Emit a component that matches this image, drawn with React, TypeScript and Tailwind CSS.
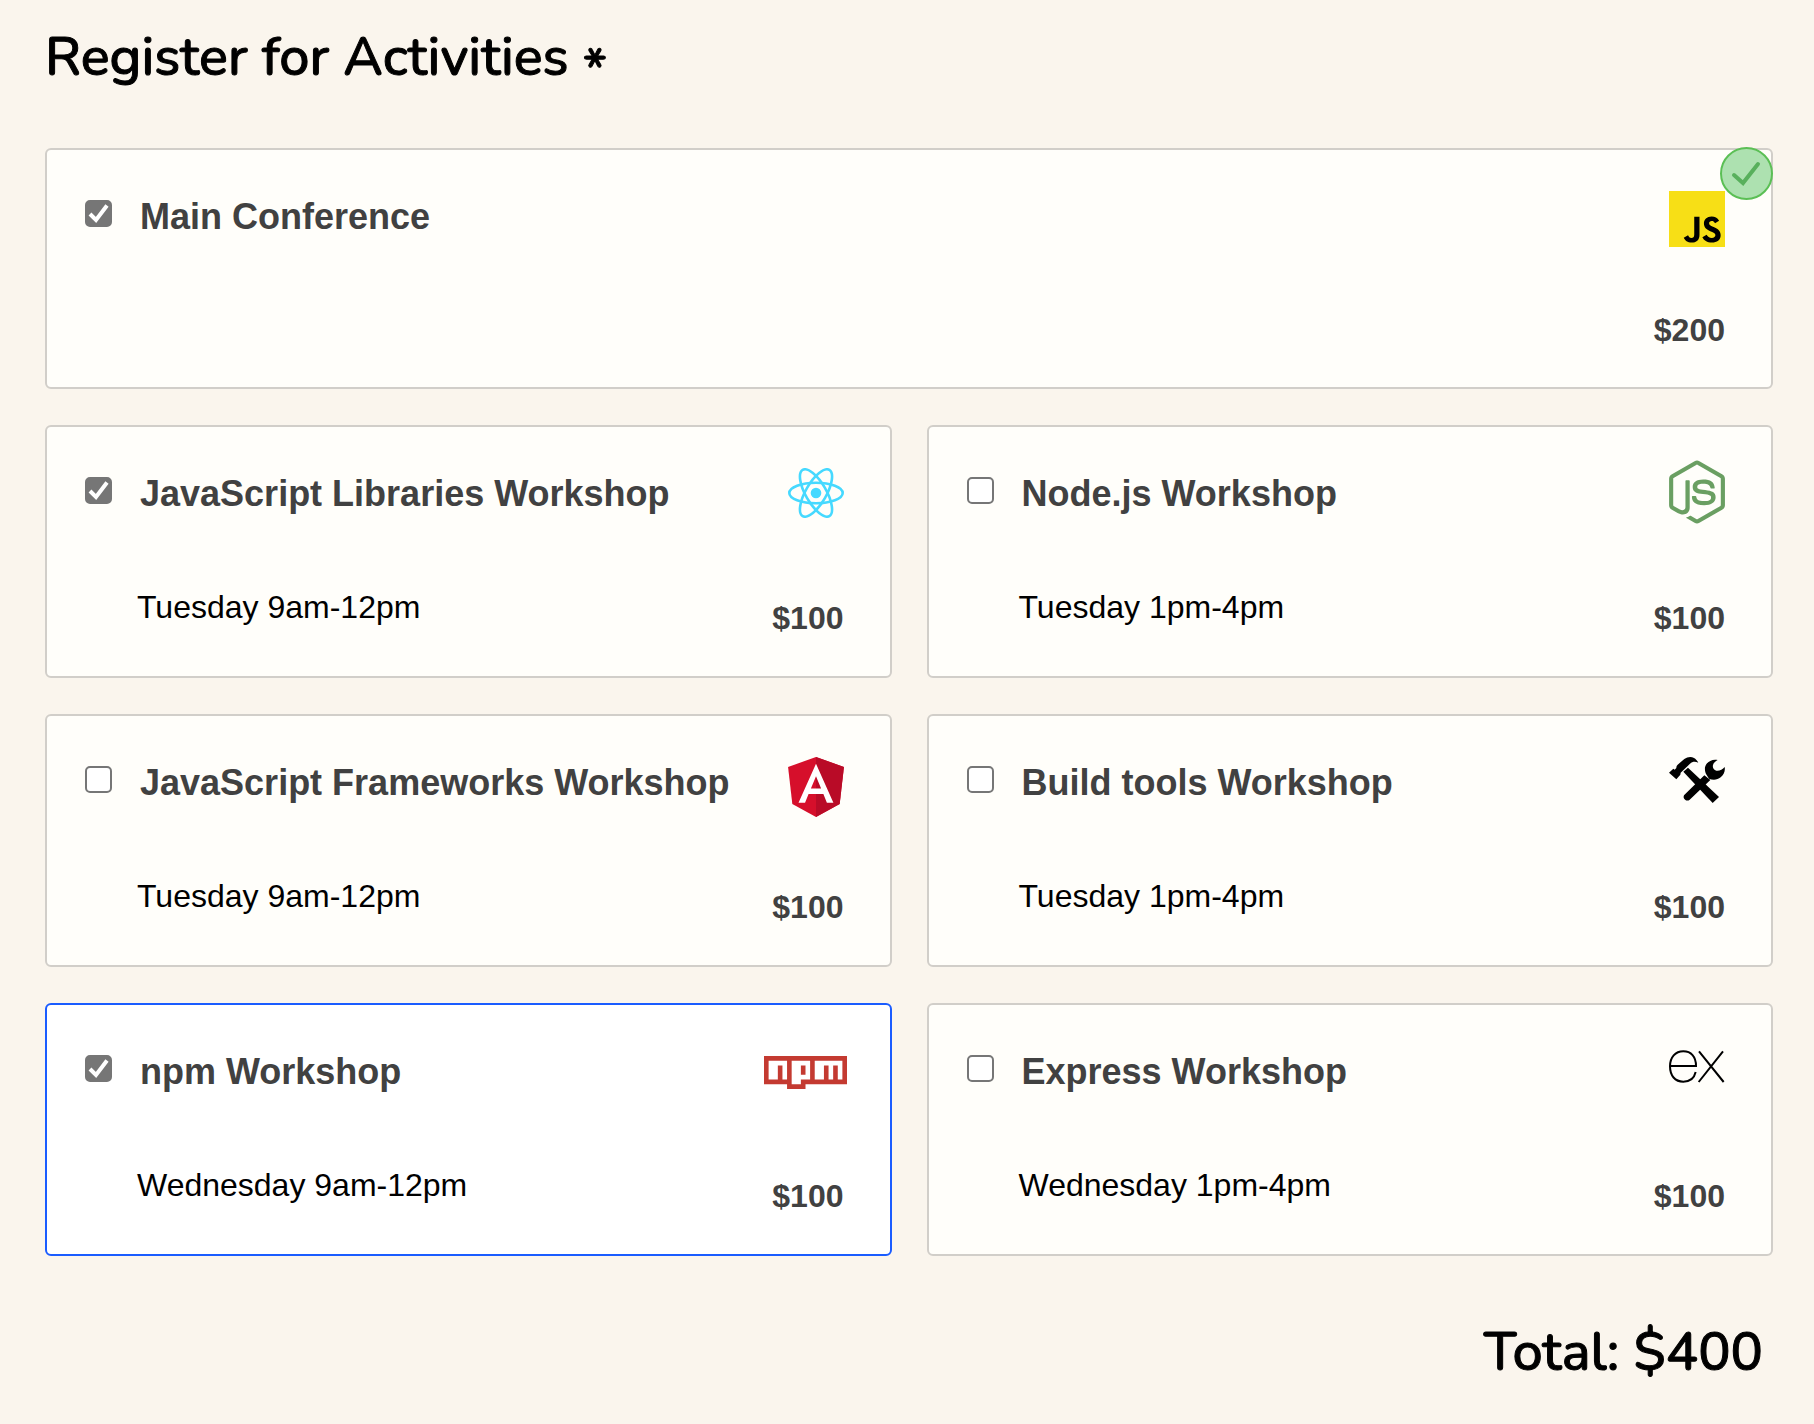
import { useState } from "react";
import type { ReactNode } from "react";
import { FaNodeJs } from "react-icons/fa";

type Activity = {
  id: string;
  title: string;
  time?: string;
  cost: number;
  icon: ReactNode;
};

function JsLogo() {
  return (
    <svg y="7" width="56" height="56" viewBox="0 0 630 630">
      <rect width="630" height="630" fill="#f7df16" />
      <path d="m423.2 492.19c12.69 20.72 29.2 35.95 58.4 35.95 24.53 0 40.2-12.26 40.2-29.2 0-20.3-16.1-27.49-43.1-39.3l-14.8-6.35c-42.72-18.2-71.1-41-71.1-89.2 0-44.4 33.83-78.2 86.7-78.2 37.64 0 64.7 13.1 84.2 47.4l-46.1 29.6c-10.15-18.2-21.1-25.37-38.1-25.37-17.34 0-28.33 11-28.33 25.37 0 17.76 11 24.95 36.4 35.95l14.8 6.34c50.3 21.57 78.7 43.56 78.7 93 0 53.3-41.87 82.5-98.1 82.5-54.98 0-90.5-26.2-107.88-60.54zm-209.13 5.13c9.3 16.5 17.76 30.45 38.1 30.45 19.45 0 31.72-7.61 31.72-37.2v-201.3h59.2v202.1c0 61.3-35.94 89.2-88.4 89.2-47.4 0-74.85-24.53-88.81-54.075z" />
    </svg>
  );
}

function ReactLogo() {
  return (
    <svg y="7" width="56" height="50" viewBox="-28 -25 56 50">
      <circle r="5.3" fill="#46d9ff" />
      <g fill="none" stroke="#46d9ff" strokeWidth="2.6">
        <ellipse rx="26.7" ry="10.3" />
        <ellipse rx="26.7" ry="10.3" transform="rotate(60)" />
        <ellipse rx="26.7" ry="10.3" transform="rotate(120)" />
      </g>
    </svg>
  );
}

function NodeLogo() {
  return <FaNodeJs x="-4" y="-1" size={64} color="#6a9f62" />;
}

function AngularLogo() {
  return (
    <svg y="7" width="56" height="60" viewBox="31.9 30 186.2 200">
      <path fill="#d60f2b" d="M125 30L31.9 63.2l14.2 123.1L125 230l78.9-43.7 14.2-123.1z" />
      <path fill="#b90b27" d="M125 30V230l78.9-43.7 14.2-123.1L125 30z" />
      <path
        fill="#fff"
        d="M125 52.1L66.8 182.6h21.7l11.7-29.2h49.4l11.7 29.2H183L125 52.1zm17 83.3h-34l17-40.9 17 40.9z"
      />
    </svg>
  );
}

function ToolsIcon() {
  return (
    <svg y="7" width="56" height="46" viewBox="0 0 168 138">
      <path d="M0 47L13 35L17 38L22 33C22 29 23 26 26 23L46 6C55 0 66 -2 75 3C80 6 85 11 88 17C78 13 70 14 63 20L35 47L34 53L22 67Z" />
      <path d="M43 44L57 32L150 120L131 138Z" />
      <path d="M45 115L106 55L124 69L62 128A11 11 0 0 1 45 115Z" />
      <path d="M146 9C130 5 112 14 108 31C107 41 109 48 113 54L120 65C130 70 145 70 155 61C165 53 169 42 167 30C161 37 150 43 142 41C134 39 130 32 132 24C134 17 140 12 146 9Z" />
    </svg>
  );
}

function NpmLogo() {
  return (
    <svg x="-24" y="17" width="83" height="33" viewBox="0 0 18 7" preserveAspectRatio="none">
      <path fill="#fff" d="M1 1h16v4H8v1H6V5H1z" />
      <path
        fill="#c43a31"
        d="M0 0h18v6H9v1H5V6H0V0zM1 5h2V2h1v3h1V1H1v4zM6 1v5h2V5h2V1H6zM8 2h1v2H8V2zM11 1v4h2V2h1v3h1V2h1v3h1V1H11z"
      />
    </svg>
  );
}

function ExpressLogo() {
  return (
    <svg y="11" width="56" height="33" viewBox="0 0 168 99">
      <g fill="none" stroke="#000" strokeWidth="6">
        <path d="M3 48H81C81 20 66 4 43 4C19 4 3 22 3 49C3 77 18 95 43 95C63 95 76 83 80 66" />
        <path d="M90 4L164 96M162 4L89 96" />
      </g>
    </svg>
  );
}

const activities: Activity[] = [
  { id: "main", title: "Main Conference", cost: 200, icon: <JsLogo /> },
  { id: "libs", title: "JavaScript Libraries Workshop", time: "Tuesday 9am-12pm", cost: 100, icon: <ReactLogo /> },
  { id: "node", title: "Node.js Workshop", time: "Tuesday 1pm-4pm", cost: 100, icon: <NodeLogo /> },
  { id: "frameworks", title: "JavaScript Frameworks Workshop", time: "Tuesday 9am-12pm", cost: 100, icon: <AngularLogo /> },
  { id: "build", title: "Build tools Workshop", time: "Tuesday 1pm-4pm", cost: 100, icon: <ToolsIcon /> },
  { id: "npm", title: "npm Workshop", time: "Wednesday 9am-12pm", cost: 100, icon: <NpmLogo /> },
  { id: "express", title: "Express Workshop", time: "Wednesday 1pm-4pm", cost: 100, icon: <ExpressLogo /> },
];

function ValidBadge() {
  return (
    <span className="absolute -top-[3px] -right-0.5 size-[53px] rounded-full border-2 border-[#5bbf55] bg-[#ade1b0]">
      <svg className="size-full" viewBox="0 0 49 49" fill="none" stroke="#58b05c" strokeWidth="4" strokeLinecap="round">
        <path d="M12 26L21 34L36 15" />
      </svg>
    </span>
  );
}

type CardProps = {
  activity: Activity;
  checked: boolean;
  active: boolean;
  onToggle: () => void;
  onFocus: () => void;
};

function ActivityCard({ activity, checked, active, onToggle, onFocus }: CardProps) {
  const main = !activity.time;
  return (
    <label
      htmlFor={activity.id}
      className={`relative block rounded-md border-2 pt-[34px] pr-[46px] pl-[38px] ${
        active ? "border-[#1a5cff] bg-white" : "border-[#d1cec9] bg-[#fffefa]"
      } ${main ? "col-span-2 pb-[39px]" : "pb-10"}`}
    >
      {main && <ValidBadge />}
      <span className="flex items-start">
        <span className="mt-4 mr-7 grid size-[27px] shrink-0">
          <input
            id={activity.id}
            type="checkbox"
            checked={checked}
            onChange={onToggle}
            onFocus={onFocus}
            className="col-start-1 row-start-1 size-full appearance-none rounded-[5px] border-2 border-[#767676] bg-white outline-none checked:bg-[#767676]"
          />
          {checked && (
            <svg
              className="pointer-events-none col-start-1 row-start-1 size-full"
              viewBox="0 0 27 27"
              fill="none"
              stroke="#fff"
              strokeWidth="4"
            >
              <path d="M5 14L11 20L22 5.500" />
            </svg>
          )}
        </span>
        <span className="mt-[13px] flex-1 text-4xl leading-10 font-bold text-[#414141]">{activity.title}</span>
        <svg className="h-[72px] w-14 shrink-0 overflow-visible" viewBox="0 0 56 72" aria-hidden="true">
          {activity.icon}
        </svg>
      </span>
      <span className="mt-14 flex items-start justify-between pl-[52px] text-[32px] leading-9">
        <span>{activity.time}</span>
        <span className={`font-bold text-[#414141] ${main ? "" : "mt-[11px]"}`}>${activity.cost}</span>
      </span>
    </label>
  );
}

export default function App() {
  const [selected, setSelected] = useState<string[]>(["main", "libs", "npm"]);
  const [active, setActive] = useState("npm");
  const total = activities.reduce((sum, a) => (selected.includes(a.id) ? sum + a.cost : sum), 0);

  const toggle = (id: string) =>
    setSelected((ids) => (ids.includes(id) ? ids.filter((i) => i !== id) : [...ids, id]));

  return (
    <form className="min-h-screen bg-[#faf5ed] pt-[21px] pr-[41px] pb-8 pl-[45px] font-['Liberation_Sans',Arial,sans-serif] text-black">
      <fieldset>
        <legend className="mb-[52px] font-[Nunito,Lato,sans-serif] text-[54px] leading-[72px] font-medium [-webkit-text-stroke:1px_black]">
          Register for Activities <span className="align-sub leading-none">*</span>
        </legend>
        <div className="grid grid-cols-2 gap-x-[35px] gap-y-9">
          {activities.map((activity) => (
            <ActivityCard
              key={activity.id}
              activity={activity}
              checked={selected.includes(activity.id)}
              active={active === activity.id}
              onToggle={() => toggle(activity.id)}
              onFocus={() => setActive(activity.id)}
            />
          ))}
        </div>
      </fieldset>
      <p className="mt-[60px] mr-2.5 text-right font-[Nunito,Lato,sans-serif] text-[54px] leading-[72px] font-medium [-webkit-text-stroke:1px_black]">
        Total: ${total}
      </p>
    </form>
  );
}
